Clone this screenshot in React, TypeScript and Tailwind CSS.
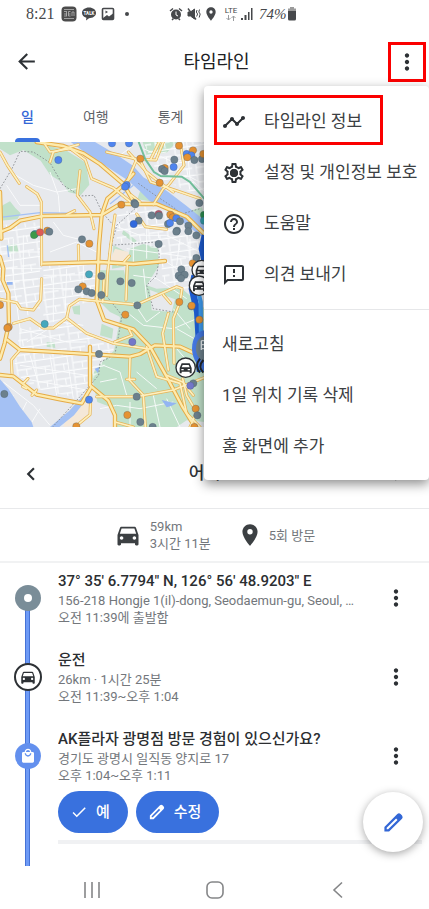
import { useState, type ReactNode } from 'react'
import {
  MdAlarm,
  MdArrowBack,
  MdCheck,
  MdChevronLeft,
  MdChevronRight,
  MdDirectionsCar,
  MdHelpOutline,
  MdLocalMall,
  MdLocationOn,
  MdMoreVert,
  MdOutlineFeedback,
  MdOutlineSettings,
  MdTimeline,
} from 'react-icons/md'

interface Entry {
  id: string
  title: string
  detail: string
  time: string
  marker: 'origin' | 'car' | 'shop'
  confirm?: boolean
}

const ENTRIES: Entry[] = [
  {
    id: 'start',
    title: '37° 35\' 6.7794" N, 126° 56\' 48.9203" E',
    detail: '156-218 Hongje 1(il)-dong, Seodaemun-gu, Seoul, …',
    time: '오전 11:39에 출발함',
    marker: 'origin',
  },
  { id: 'drive', title: '운전', detail: '26km · 1시간 25분', time: '오전 11:39~오후 1:04', marker: 'car' },
  {
    id: 'plaza',
    title: 'AK플라자 광명점 방문 경험이 있으신가요?',
    detail: '경기도 광명시 일직동 양지로 17',
    time: '오후 1:04~오후 1:11',
    marker: 'shop',
    confirm: true,
  },
]

const TABS = ['일', '여행', '통계']

const MAIN_ROADS = [
  'M0 270 L30 258 L60 236 L130 222 L305 219 L360 186 L470 186 L560 224 L615 278',
  'M0 150 L4 290',
  'M0 345 L10 380 L8 414 L25 454 L27 544 L14 604 L0 650',
  'M400 95 L372 128 L322 170 L305 219 L297 310 L290 474 L312 534 L400 562 L450 614 L500 704 L545 790 L585 855',
  'M130 365 L300 360 L400 366 L495 357',
  'M110 0 L190 12 L250 34 L300 66 L370 126 L405 186',
  'M22 594 L60 624 L150 629 L390 644 L420 636 L465 610 L540 614 L610 646',
  'M0 699 L40 703 L110 758 L180 772 L245 784 L272 738',
  'M270 614 L270 730 L325 776 L345 820 L345 855',
]

const ROADS = [
  'M80 134 L112 156 L124 180 L125 369',
  'M125 410 L122 474 L100 504 L62 500 L50 482 L0 472',
  'M345 219 L332 310 L322 400 L320 460',
  'M130 0 L150 30 L210 20 L256 54 L275 110 L340 138 L400 186',
  'M150 60 L160 30 L235 8',
  'M320 30 L420 54 L452 120 L530 146 L600 170',
  'M385 30 L440 90 L480 122 L520 150',
  'M540 0 L552 70 L505 130 L490 140 L460 188',
  'M490 0 L468 54 L410 52 L385 110',
  'M478 0 L452 52',
  'M0 30 L22 70 L58 124',
  'M40 544 L90 530 L130 558 L160 558 L200 528 L260 574 L340 604 L440 620',
  'M200 528 L208 492 L238 472 L410 488 L530 434 L546 440 L540 480 L520 530 L522 664',
  'M490 458 L512 484',
  'M505 514 L488 574 L505 684',
  'M290 764 L410 764 L520 744 L615 706',
  'M60 624 L34 654 L36 694',
  'M390 649 L388 714 L430 759 L436 855',
  'M440 614 L470 704 L540 724 L560 814 L600 855',
  'M272 770 L270 818 L225 855',
  'M345 840 L400 855',
  'M382 365 L378 474',
  'M312 414 L308 480',
  'M240 86 L232 160 L270 210 L282 260',
  'M386 560 L396 580 L344 600',
  'M235 310 L236 354',
  'M372 360 L388 342',
  'M200 218 L224 206',
  'M410 216 L436 254 L500 262',
  'M392 158 L420 180',
  'M500 700 L548 720 L580 760',
  'M548 710 L560 760 L590 810 L570 855',
  'M380 712 L404 712',
  'M80 740 L68 734 M70 724 L84 710 M96 760 L110 744',
]

const STREETS = [
  'M30 90 L100 130 L170 150 L230 140',
  'M20 130 L60 190 L120 190',
  'M150 90 L175 160 L180 220',
  'M40 290 L40 414 L60 560 L60 620',
  'M70 280 L70 414 L84 520',
  'M0 330 L120 330 M0 380 L125 380 M0 420 L120 410',
  'M160 240 L190 280 L270 300',
  'M150 330 L230 300 L290 330',
  'M160 380 L160 540 M200 380 L196 500 M250 370 L250 460',
  'M130 400 L290 398 M130 440 L280 440',
  'M60 560 L200 600 L260 600 M80 600 L180 540 L250 550',
  'M90 640 L120 740 M150 640 L170 760 M200 640 L220 770 M60 670 L260 700 M70 710 L260 744',
  'M10 720 L100 790 L150 850 M40 760 L10 800 M80 780 L50 840 M120 800 L90 850',
  'M340 250 L420 280 L500 280 L600 330',
  'M400 300 L400 360 M440 260 L440 350 M480 280 L480 360 M540 290 L530 370 M570 290 L570 380',
  'M380 320 L600 350 M500 360 L560 400 L600 440',
  'M400 400 L470 410 L560 470 M430 380 L440 470',
  'M380 510 L430 550 L520 560 L590 530 M400 480 L440 540 L480 510',
  'M310 670 L360 690 L380 760 M300 720 L350 710 M410 690 L470 740',
  'M300 800 L350 790 L420 800 L520 780 M390 780 L390 855 M460 760 L480 855 M500 770 L540 855',
  'M430 20 L520 60 L615 40 M560 0 L570 110 L615 150 M500 30 L440 40',
  'M480 110 L560 100 L600 120 M300 40 L360 40 L400 10',
  'M530 560 L600 600 M530 620 L590 690 M520 500 L570 560',
]

// areas dense enough to get the block pattern
const BLOCKS = [
  'M0 250 L120 240 L120 500 L60 490 L0 470 Z',
  'M130 370 H285 V480 L210 490 L190 530 L130 550 Z',
  'M60 560 L200 540 L340 610 L340 640 L270 720 L240 770 L110 740 L40 690 Z',
  'M420 190 L500 210 L615 290 L615 440 L490 440 L480 320 L350 300 L350 220 Z',
  'M430 0 H615 V170 L480 110 Z',
]

const GREENS = [
  'M0 0 L110 0 L200 26 L258 62 L268 128 L242 160 L205 150 L188 122 L150 98 L122 56 L70 24 L30 40 L0 20 Z',
  'M8 190 L30 178 L46 198 L62 214 L52 232 L0 236 L0 200 Z',
  'M428 0 L530 0 L500 32 L440 40 Z',
  'M420 148 L470 150 L450 178 L412 172 Z',
  'M370 264 L410 296 L404 304 L366 276 Z',
  'M390 320 L430 306 L474 318 L476 372 L440 430 L470 440 L540 435 L615 500 L615 855 L345 855 L345 800 L292 780 L274 700 L310 656 L342 626 L360 530 L352 470 L372 400 Z',
  'M340 310 L380 330 L372 374 L336 380 Z',
  'M290 385 L372 385 L372 530 L330 510 L300 480 Z',
  'M305 545 L340 560 L336 590 L300 580 Z',
  'M216 494 L240 490 L240 518 L222 516 Z',
  'M570 206 L606 196 L612 222 L590 232 Z',
  'M20 310 L50 306 L56 330 L24 334 Z',
  'M140 600 L164 602 L166 618 L140 614 Z',
]

const SLATE = '#6c808c'
const ORANGE = '#e59232'
const BLUE = '#4f84ee'

const PINS: [number, number, string][] = [
  [175, 54, BLUE], [336, 4, BLUE], [387, 4, BLUE], [421, 50, ORANGE], [523, 53, SLATE], [521, 75, BLUE],
  [537, 11, ORANGE], [579, 25, ORANGE], [560, 36, BLUE], [574, 40, BLUE], [562, 46, ORANGE], [583, 54, SLATE], [606, 51, SLATE],
  [610, 36, ORANGE], [494, 78, ORANGE], [486, 81, SLATE], [494, 87, SLATE], [479, 122, ORANGE], [598, 183, SLATE],
  [380, 129, BLUE], [375, 134, BLUE], [364, 188, ORANGE], [403, 183, SLATE], [406, 187, SLATE],
  [455, 220, SLATE], [476, 216, '#b95368'], [477, 221, SLATE], [416, 236, SLATE], [401, 246, '#3069de'],
  [511, 218, ORANGE], [518, 226, ORANGE], [504, 246, SLATE], [510, 243, BLUE], [529, 229, BLUE], [540, 238, SLATE],
  [565, 251, SLATE], [531, 266, SLATE], [529, 269, SLATE], [565, 268, SLATE], [589, 280, SLATE], [476, 306, SLATE],
  [612, 219, '#2d9150'], [612, 236, '#34a0ad'],
  [105, 276, '#34a0ad'], [102, 279, '#3d9a4a'], [120, 271, '#df5b55'], [142, 266, ORANGE], [148, 269, SLATE],
  [246, 292, SLATE], [268, 305, ORANGE], [267, 397, '#46a8bd'], [304, 402, SLATE], [361, 418, SLATE], [395, 423, SLATE],
  [248, 433, ORANGE], [235, 442, SLATE], [260, 448, SLATE], [275, 453, SLATE], [304, 459, SLATE],
  [544, 382, SLATE], [536, 401, SLATE], [554, 398, SLATE], [543, 409, SLATE], [589, 348, SLATE], [578, 364, ORANGE],
  [412, 490, SLATE], [376, 518, ORANGE], [538, 480, ORANGE], [134, 546, '#46a8bd'], [26, 555, ORANGE], [22, 558, ORANGE],
  [0, 489, ORANGE], [397, 600, '#7377c9'], [297, 636, SLATE], [13, 756, SLATE], [267, 773, BLUE], [410, 764, SLATE],
  [382, 819, ORANGE], [421, 840, SLATE], [458, 855, SLATE], [229, 853, ORANGE], [580, 724, SLATE], [571, 731, '#7377c9'],
  [587, 800, ORANGE], [592, 820, SLATE], [583, 855, ORANGE], [574, 493, SLATE], [575, 491, ORANGE], [598, 533, ORANGE],
]

function CarPin({ x, y }: { x: number; y: number }) {
  return (
    <g transform={`translate(${x} ${y})`}>
      <circle r="29" fill="#fff" stroke="#2d3135" strokeWidth="4" />
      <path
        d="M-12 -13 H12 L18 1 V17 H12 V12 H-12 V17 H-18 V1 Z M-9 -8 L-12 -1 H12 L9 -8 Z M-13 4 V8 H-6 V4 Z M6 4 V8 H13 V4 Z"
        fill="#2d3135"
        fillRule="evenodd"
      />
    </g>
  )
}

function MapView() {
  return (
    <svg viewBox="0 0 1287 855" preserveAspectRatio="xMinYMin slice" className="block h-[285px] w-full bg-[#e7e9ed]" aria-label="지도">
      <defs>
        <pattern id="blocks" width="56" height="44" patternUnits="userSpaceOnUse" patternTransform="rotate(-8)">
          <path d="M0 4 H56 M12 4 V44 M12 26 H56 M40 26 V44" stroke="#fcfdfe" strokeWidth="3" fill="none" />
        </pattern>
      </defs>
      {GREENS.map((d) => <path key={d} d={d} fill="#c1e1ca" />)}
      <path d="M450 444 L525 472 L515 510 L455 505 Z M530 855 L560 835 L615 840 V855 Z" fill="#e7e9ed" />
      <path d="M345 320 L385 330 L388 350 L352 372 L332 350 Z M210 800 L264 760 L280 790 L240 850 L190 855 Z" fill="#f5e8d8" />
      {BLOCKS.map((d) => <path key={d} d={d} fill="url(#blocks)" />)}
      <g fill="none" stroke="#fcfdfe" strokeWidth="3" strokeLinejoin="round" opacity="0.9">
        {STREETS.map((d) => <path key={d} d={d} />)}
      </g>

      {/* river and reservoirs */}
      <path d="M212 0 H285 L350 38 L400 72 L430 106 L500 146 L560 192 L615 236 V292 L560 250 L500 204 L450 178 L420 148 L385 116 L330 80 L265 38 Z" fill="#a4c1f4" />
      <path d="M0 712 L26 742 L60 794 L95 840 L100 855 H0 Z M150 855 L208 806 L246 764 L266 764 L222 820 L178 855 Z" fill="#a4c1f4" />
      <path d="M485 774 L510 780 L530 784 L514 792 L500 796 Z M284 680 L298 676 L294 694 Z M468 642 L478 648 L474 656 Z M20 420 L38 420 L38 428 H20 Z" fill="#93b5f2" />
      <path d="M0 226 L120 212 L230 214 M330 186 L400 130 M22 310 L26 345" stroke="#a4c1f4" strokeWidth="4" fill="none" />

      <g fill="none" stroke="#83878c" strokeWidth="2.5" strokeDasharray="5 5">
        <path d="M0 140 L36 80 L60 28 L100 30 L150 62 L188 128 L240 162 L282 160 L306 210 L340 250 L330 310 L470 300 L478 340 L470 400 L440 430 L460 500 L520 510" />
        <path d="M415 124 L460 156 L520 196 L545 216 L600 200" />
        <path d="M405 200 L350 250 L326 340 L318 460 L366 520 L356 580 L344 640 L300 660 L296 700 L240 764 L158 855" />
      </g>

      <g fill="none" strokeLinejoin="round" strokeLinecap="round">
        {ROADS.map((d) => <path key={d} d={d} stroke="#e7b354" strokeWidth="9" />)}
        {MAIN_ROADS.map((d) => <path key={d} d={d} stroke="#e5ab45" strokeWidth="13" />)}
        {ROADS.map((d) => <path key={d} d={d} stroke="#fdf0c0" strokeWidth="5" />)}
        {MAIN_ROADS.map((d) => <path key={d} d={d} stroke="#fdebae" strokeWidth="7" />)}
      </g>
      <path d="M416 0 L436 52 L462 90 L482 102 L545 104 L570 120 L615 172" fill="none" stroke="#72bf9b" strokeWidth="6" />

      {/* travelled route */}
      <path d="M615 280 L606 320 L615 360 M584 400 L576 440 L592 510 L596 580 L600 690" fill="none" stroke="#1d5bcf" strokeWidth="20" />
      <path d="M585 410 L602 480 L604 690" fill="none" stroke="#3d9bf0" strokeWidth="13" />
      {PINS.map(([x, y, color], i) => (
        <circle key={i} cx={x} cy={y} r="11" fill={color} stroke="#47596b" strokeOpacity="0.45" strokeWidth="2" />
      ))}
      <path d="M620 564 C590 564 576 590 576 620 C576 650 596 680 620 694 Z" fill="#4478e2" />
      <path d="M620 580 C598 582 588 600 588 620 C588 642 602 656 620 666 Z" fill="#6d818d" />
      <path d="M604 596 H616 M604 608 H616 M604 620 H616 M604 596 V624" stroke="#e6ecef" strokeWidth="4" />
      <path d="M600 650 Q582 672 600 692 M610 654 Q592 674 610 692" fill="none" stroke="#24282d" strokeWidth="6" />
      <CarPin x={605} y={384} />
      <CarPin x={597} y={431} />
      <CarPin x={557} y={677} />
    </svg>
  )
}

function PencilIcon({ className }: { className: string }) {
  return (
    <svg viewBox="0 0 24 24" className={className} fill="currentColor" aria-hidden="true">
      <path
        fillRule="evenodd"
        d="M2.5 21.5 V16.6 L16 3.1 Q17.7 1.7 19.4 3.1 L20.9 4.6 Q22.3 6.3 20.9 8 L7.4 21.5 Z M4.9 19.1 H6.4 L16.2 9.3 L14.7 7.8 L4.9 17.6 Z"
      />
    </svg>
  )
}

function StatusBar() {
  return (
    <div className="flex h-7 items-center pl-[26px] text-[#46484b]">
      <span className="w-[35px] font-['Liberation_Serif'] text-base">8:21</span>
      <svg viewBox="0 0 16 16" className="h-4 w-4" aria-hidden="true">
        <rect x="0.5" y="0.5" width="15" height="15" rx="4" fill="#4b4b4b" />
        <path d="M3 3.5 H13 M3 12.5 H13 M3 5.5 H6 M3 8 H6 M5.5 6 V10 M3 10 H6 M7.5 5.5 V10 M7.5 5.5 H9.5 M7.5 8 H9.5 M7.5 10 H9.5 M11 10 V6 H13 V10" stroke="#b5b5b5" strokeWidth="0.8" fill="none" />
      </svg>
      <svg viewBox="0 0 16 14" className="ml-1 h-3.5 w-4" aria-hidden="true">
        <path d="M8 0.5 C12 0.5 15 2.8 15 6 C15 9.3 11.5 11.2 8 11.2 L5 13.5 L5.4 10.8 C2.8 10 1 8.2 1 6 C1 2.8 4 0.5 8 0.5 Z" fill="#46484b" />
        <text x="8" y="7.6" textAnchor="middle" fontSize="4.5" fontWeight="700" fill="#fff" fontFamily="Roboto">TALK</text>
      </svg>
      <svg viewBox="0 0 14 14" className="ml-1 h-3.5 w-3.5" aria-hidden="true">
        <rect x="1.5" y="1.5" width="11" height="11" rx="1" fill="none" stroke="#46484b" strokeWidth="1.6" />
        <path d="M2 11 L6 8 L8 9.5 L12 6.5 V12 H2 Z" fill="#46484b" />
        <path d="M4.5 3.5 V6.5 L7 5 Z" fill="#46484b" />
      </svg>
      <span className="ml-2.5 h-1 w-1 rounded-full bg-[#46484b]" />
      <svg viewBox="0 0 14 14" className="ml-10 h-3.5 w-3.5" aria-hidden="true">
        <circle cx="7" cy="7.5" r="5" fill="#46484b" />
        <path d="M1 4 L4 1.5 M13 4 L10 1.5 M3 13 L4.5 11.5 M11 13 L9.5 11.5" stroke="#46484b" strokeWidth="1.5" />
        <path d="M7 4.5 V8 L9 9" stroke="#fff" fill="none" />
      </svg>
      <svg viewBox="0 0 14 14" className="ml-1 h-3.5 w-3.5" fill="none" stroke="currentColor" aria-hidden="true">
        <path d="M1 5 H3.5 L7.5 2 V12 L3.5 9 H1 Z" fill="currentColor" />
        <path d="M1 1.5 L9 12.5" strokeWidth="1.4" />
        <path d="M10 3 L9.3 5 L10.6 7 L9.6 9.5 M12.5 2.5 L11.8 5 L13.2 7 L12.2 10.5" />
      </svg>
      <MdLocationOn className="ml-0.5 h-4 w-4" />
      <span className="ml-1 flex w-4 flex-col items-center text-[8px] leading-[8px]">
        <span>LTE</span>
        <svg viewBox="0 0 12 6" className="h-1.5 w-3" fill="none" stroke="#9a9c9f" aria-hidden="true">
          <path d="M3.5 0 V5 M1.5 3 L3.5 5 L5.5 3 M8.5 6 V1 M6.5 3 L8.5 1 L10.5 3" />
        </svg>
      </span>
      <svg viewBox="0 0 12 12" className="ml-0.5 h-3 w-3" fill="currentColor" aria-hidden="true">
        <path d="M0 10 H2 V12 H0 Z M3.5 7 H5.5 V12 H3.5 Z M7 4 H8.5 V12 H7 Z M10 0 H11.5 V12 H10 Z" />
      </svg>
      <span className="ml-1.5 font-['Liberation_Serif'] text-[15px] italic">74%</span>
      <svg viewBox="0 0 10 14" className="h-3.5 w-2.5" aria-hidden="true">
        <path d="M3 0 H7 V1.5 H9 V4 H1 V1.5 H3 Z" fill="#9b9b9b" />
        <path d="M1 4 H9 V12 Q9 13.5 7.5 13.5 H2.5 Q1 13.5 1 12 Z" fill="#46484b" />
      </svg>
    </div>
  )
}

function MenuItem({ icon, label, marked }: { icon?: ReactNode; label: string; marked?: boolean }) {
  return (
    <button role="menuitem" className="relative flex h-[51px] w-full items-center pl-[18px] text-left text-[17px] whitespace-nowrap text-[#3c4043]">
      {icon && <span className="w-[42px] text-[#2d3135]">{icon}</span>}
      {label}
      {marked && <span className="absolute -top-px left-2.5 h-[50px] w-[169px] border-3 border-[#fb0000]" />}
    </button>
  )
}

function OverflowMenu() {
  return (
    <div role="menu" className="absolute top-[86px] right-0 w-[225px] rounded bg-white pt-2.5 pb-2 shadow-[0_4px_12px_rgba(0,0,0,0.45)]">
      <MenuItem icon={<MdTimeline className="h-6 w-6" />} label="타임라인 정보" marked />
      <MenuItem
        icon={
          <span className="relative block h-6 w-6">
            <MdOutlineSettings className="h-6 w-6" />
            <span className="absolute top-2 left-2 h-2 w-2 rounded-full bg-[#2d3135]" />
          </span>
        }
        label="설정 및 개인정보 보호"
      />
      <MenuItem icon={<MdHelpOutline className="h-6 w-6" />} label="도움말" />
      <MenuItem icon={<MdOutlineFeedback className="h-6 w-6" />} label="의견 보내기" />
      <hr className="my-[9px] border-t-1 border-[#e6e7e9]" />
      <MenuItem label="새로고침" />
      <MenuItem label="1일 위치 기록 삭제" />
      <MenuItem label="홈 화면에 추가" />
    </div>
  )
}

function Marker({ kind }: { kind: Entry['marker'] }) {
  if (kind === 'origin') {
    return (
      <span className="relative flex h-[26px] w-[26px] items-center justify-center rounded-full bg-[#7a8d98]">
        <span className="h-2 w-2 rounded-full bg-white" />
      </span>
    )
  }
  if (kind === 'car') {
    return (
      <span className="relative flex h-7 w-7 items-center justify-center rounded-full border-2 border-[#2d3135] bg-white">
        <MdDirectionsCar className="h-[18px] w-[18px] text-[#2d3135]" />
      </span>
    )
  }
  return (
    <span className="relative flex h-[26px] w-[26px] items-center justify-center rounded-full bg-[#6390ee]">
      <MdLocalMall className="h-4 w-4 text-white" />
    </span>
  )
}

function TimelineEntry({ entry }: { entry: Entry }) {
  return (
    <li className="relative flex">
      {/* the rail starts under the first marker and runs through all the others */}
      <span
        className={`absolute bottom-0 left-[25px] w-[5px] border-x border-[#4673d6] bg-[#6d9af6] ${
          entry.marker === 'origin' ? 'top-7' : 'top-0'
        }`}
      />
      <span className="flex h-14 w-[55px] shrink-0 items-center justify-center">
        <Marker kind={entry.marker} />
      </span>
      <div className={`min-w-0 flex-1 pl-[3px] ${entry.confirm ? 'pb-[22px]' : 'pb-[23px]'}`}>
        <div className="flex">
          <div className="min-w-0 flex-1">
            <h2 className="truncate text-[15px] leading-[22px] font-medium text-[#2b2e31]">{entry.title}</h2>
            <p className="truncate text-[13px] leading-[17px] text-[#73777c]">{entry.detail}</p>
            <p className="text-[13px] leading-[17px] text-[#73777c]">{entry.time}</p>
          </div>
          <button aria-label="옵션 더보기" className="flex h-14 w-[66px] shrink-0 items-center justify-center text-[#2d3135]">
            <MdMoreVert className="h-[26px] w-[26px]" />
          </button>
        </div>
        {entry.confirm && (
          <>
            <div className="mt-[7px] flex gap-2 text-[15px] font-medium text-white">
              <button className="flex h-[42px] items-center gap-2 rounded-full bg-[#3971de] pr-[18px] pl-3">
                <MdCheck className="h-[18px] w-[18px]" />예
              </button>
              <button className="flex h-[42px] items-center gap-2 rounded-full bg-[#3971de] pr-[18px] pl-3">
                <PencilIcon className="h-[18px] w-[18px]" />수정
              </button>
            </div>
            <div className="mt-[7px] mr-[7px] h-1 bg-[#f0f1f3]" />
          </>
        )}
      </div>
    </li>
  )
}

export default function App() {
  const [tab, setTab] = useState(TABS[0])

  return (
    <div className="relative flex min-h-screen flex-col overflow-hidden bg-white font-['Roboto','Noto_Sans_CJK_KR',sans-serif]">
      <StatusBar />

      <header className="flex h-[67px] items-center justify-between pr-[3px] pl-3.5">
        <button aria-label="뒤로" className="flex w-[31px] text-[#2d3135]">
          <MdArrowBack className="h-[25px] w-[25px]" />
        </button>
        <h1 className="text-lg text-[#202124]">타임라인</h1>
        <button aria-label="메뉴" className="flex h-10 w-[38px] items-center justify-center border-3 border-[#fb0000] text-[#2d3135]">
          <MdMoreVert className="h-[26px] w-[26px]" />
        </button>
      </header>

      <nav className="flex h-[47px] gap-[49px] pl-[21px] text-sm shadow-[0_2px_2px_-1px_rgba(0,0,0,0.3)]">
        {TABS.map((name) => (
          <button
            key={name}
            onClick={() => setTab(name)}
            className={
              tab === name
                ? 'relative pb-1 font-medium text-[#3367d6] after:absolute after:-inset-x-1.5 after:bottom-0 after:h-1 after:rounded-t after:bg-[#3971de]'
                : 'pb-1 text-[#5f6368]'
            }
          >
            {name}
          </button>
        ))}
      </nav>

      <MapView />

      <section>
        <div className="flex h-[82px] items-center justify-between border-b border-[#e8e9eb] px-[18px] pt-3 text-[#2d3135]">
          <button aria-label="이전 날짜"><MdChevronLeft className="h-[26px] w-[26px]" /></button>
          <button className="flex items-center text-[17px] font-medium">
            어제
            <svg viewBox="0 0 20 20" className="h-5 w-5" fill="currentColor" aria-hidden="true"><path d="M5 8 H15 L10 13 Z" /></svg>
          </button>
          <button aria-label="다음 날짜"><MdChevronRight className="h-[26px] w-[26px]" /></button>
        </div>

        <div className="flex h-[54px] items-center justify-center gap-[26px] border-b-2 border-[#f1f2f3] text-[13px] leading-[17px] text-[#73777c]">
          <div className="flex items-center gap-2">
            <MdDirectionsCar className="h-7 w-7 text-[#3c4043]" />
            <p>59km<br />3시간 11분</p>
          </div>
          <div className="flex items-center gap-1.5">
            <MdLocationOn className="h-[26px] w-[26px] text-[#3c4043]" />
            <p>5회 방문</p>
          </div>
        </div>

        <ul className="pt-[7px]">
          {ENTRIES.map((entry) => <TimelineEntry key={entry.id} entry={entry} />)}
        </ul>
      </section>

      <footer className="mt-auto flex h-10 items-center justify-around px-[30px] pt-0.5 text-[#858688]">
        <button aria-label="최근 앱">
          <svg viewBox="0 0 18 18" className="h-[18px] w-[18px]" stroke="currentColor" strokeWidth="1.6"><path d="M2 1 V17 M9 1 V17 M16 1 V17" /></svg>
        </button>
        <button aria-label="홈">
          <svg viewBox="0 0 18 18" className="h-[18px] w-[18px]" fill="none" stroke="currentColor" strokeWidth="1.6"><rect x="1" y="1" width="16" height="16" rx="5" /></svg>
        </button>
        <button aria-label="뒤로 가기">
          <svg viewBox="0 0 18 18" className="h-[18px] w-[18px]" fill="none" stroke="currentColor" strokeWidth="1.6"><path d="M13 1.5 L5 9 L13 16.5" /></svg>
        </button>
      </footer>

      <button aria-label="수정" className="absolute right-1.5 bottom-[57px] flex h-[60px] w-[60px] items-center justify-center rounded-full bg-white text-[#3367d6] shadow-[0_2px_8px_rgba(0,0,0,0.35)]">
        <PencilIcon className="h-[23px] w-[23px]" />
      </button>

      <OverflowMenu />
    </div>
  )
}
